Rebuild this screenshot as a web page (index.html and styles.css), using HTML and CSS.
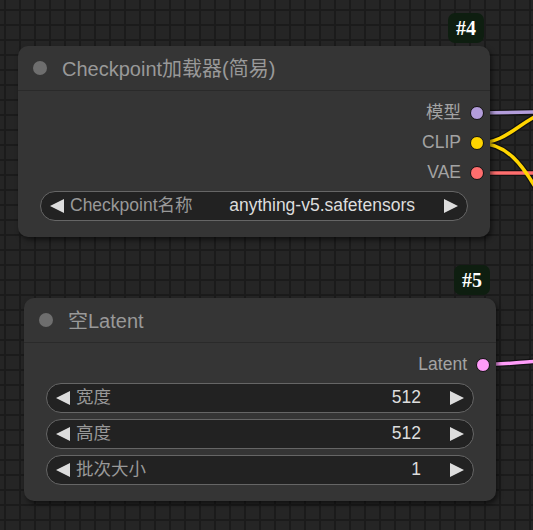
FILE: index.html
```html
<!DOCTYPE html>
<html lang="zh">
<head>
<meta charset="utf-8">
<title>ComfyUI nodes</title>
<link rel="stylesheet" href="styles.css">
</head>
<body>
<div class="canvas">
  <svg class="wires" width="533" height="530" viewBox="0 0 533 530">
    <g class="wire-outline">
      <path d="M477 113 L540 112"/>
      <path d="M477 143 C505 143 515 126 540 114"/>
      <path d="M477 143 C505 143 522 160 545 205"/>
      <path d="M477 173 L540 173"/>
      <path d="M484 364.5 C510 364 520 362 540 361"/>
    </g>
    <path class="wire model" d="M477 113 L540 112"/>
    <path class="wire vae" d="M477 173 L540 173"/>
    <path class="wire clip" d="M477 143 C505 143 515 126 540 114"/>
    <path class="wire clip" d="M477 143 C505 143 522 160 545 205"/>
    <path class="wire latent" d="M484 364.5 C510 364 520 362 540 361"/>
  </svg>

  <div class="badge badge-4">#4</div>
  <div class="node node-ckpt">
    <div class="node-title"><span class="title-dot"></span><span class="title-text">Checkpoint加载器(简易)</span></div>
    <div class="node-body">
      <div class="outputs">
        <div class="slot"><span class="slot-label">模型</span><span class="slot-dot dot-model"></span></div>
        <div class="slot"><span class="slot-label">CLIP</span><span class="slot-dot dot-clip"></span></div>
        <div class="slot"><span class="slot-label">VAE</span><span class="slot-dot dot-vae"></span></div>
      </div>
      <div class="widgets">
        <div class="widget"><span class="arrow arrow-left"></span><span class="w-label">Checkpoint名称</span><span class="w-value">anything-v5.safetensors</span><span class="arrow arrow-right"></span></div>
      </div>
    </div>
  </div>

  <div class="badge badge-5">#5</div>
  <div class="node node-latent">
    <div class="node-title"><span class="title-dot"></span><span class="title-text">空Latent</span></div>
    <div class="node-body">
      <div class="outputs">
        <div class="slot"><span class="slot-label">Latent</span><span class="slot-dot dot-latent"></span></div>
      </div>
      <div class="widgets">
        <div class="widget"><span class="arrow arrow-left"></span><span class="w-label">宽度</span><span class="w-value">512</span><span class="arrow arrow-right"></span></div>
        <div class="widget"><span class="arrow arrow-left"></span><span class="w-label">高度</span><span class="w-value">512</span><span class="arrow arrow-right"></span></div>
        <div class="widget"><span class="arrow arrow-left"></span><span class="w-label">批次大小</span><span class="w-value">1</span><span class="arrow arrow-right"></span></div>
      </div>
    </div>
  </div>
</div>
</body>
</html>
```

FILE: styles.css
```css
html, body {
  margin: 0;
  padding: 0;
  width: 533px;
  height: 530px;
  overflow: hidden;
  background: #222222;
}

.canvas {
  position: relative;
  width: 533px;
  height: 530px;
  background-color: #252525;
  background-image:
    linear-gradient(to right, #1b1b1b 2px, transparent 2px),
    linear-gradient(to bottom, #1b1b1b 2px, transparent 2px);
  background-size: 15px 15px;
  background-position: 4px 9px;
  font-family: "Liberation Sans", Arial, "Noto Sans CJK SC", sans-serif;
}

.wires {
  position: absolute;
  left: 0;
  top: 0;
}

.wire-outline path {
  fill: none;
  stroke: #111;
  stroke-width: 6;
}

.wire {
  fill: none;
  stroke-width: 3.5;
}
.wire.model { stroke: #b39ddb; }
.wire.clip { stroke: #ffd500; }
.wire.vae { stroke: #ff6e6e; }
.wire.latent { stroke: #ff9cf9; }

.badge {
  position: absolute;
  height: 30px;
  padding: 0 8px;
  border-radius: 7px;
  background: #0e1e10;
  color: #ffffff;
  font-family: "Liberation Serif", "Times New Roman", serif;
  font-weight: bold;
  font-size: 20px;
  line-height: 30px;
}
.badge-4 { left: 448px; top: 13px; }
.badge-5 { left: 454px; top: 265px; }

.node {
  position: absolute;
  width: 472px;
  background: #353535;
  border-radius: 10px;
  box-shadow: 2px 3px 5px rgba(0, 0, 0, 0.55);
  display: flex;
  flex-direction: column;
}
.node-ckpt { left: 18px; top: 46px; }
.node-latent { left: 24px; top: 298px; }

.node-title {
  height: 45px;
  display: flex;
  align-items: center;
  padding-left: 15px;
  gap: 15px;
  border-bottom: 1px solid #2a2a2a;
  box-sizing: border-box;
}

.title-dot {
  width: 14px;
  height: 14px;
  border-radius: 50%;
  background: #6e6e6e;
  flex: none;
}

.title-text {
  color: #999999;
  font-size: 20px;
  line-height: 1;
  padding-top: 1px;
}

.node-body {
  display: flex;
  flex-direction: column;
  padding-top: 7px;
  padding-bottom: 16px;
}

.outputs {
  display: flex;
  flex-direction: column;
}

.slot {
  height: 30px;
  display: flex;
  align-items: center;
  justify-content: flex-end;
  padding-right: 6px;
  gap: 9px;
}

.slot-label {
  color: #a3a3a3;
  font-size: 17.5px;
  line-height: 1;
}

.slot-dot {
  width: 12px;
  height: 12px;
  border-radius: 50%;
  border: 1px solid #111;
  flex: none;
}
.dot-model { background: #b39ddb; }
.dot-clip { background: #ffd500; }
.dot-vae { background: #ff6e6e; }
.dot-latent { background: #ff9cf9; }

.widgets {
  display: flex;
  flex-direction: column;
  gap: 6px;
  margin: 3px 22px 0;
}

.widget {
  height: 30px;
  box-sizing: border-box;
  border: 1px solid #666666;
  border-radius: 15px;
  background: #222222;
  display: flex;
  align-items: center;
  padding: 0 9px 0 9px;
  font-size: 17.5px;
}

.arrow {
  width: 0;
  height: 0;
  border-top: 7.5px solid transparent;
  border-bottom: 7.5px solid transparent;
  flex: none;
}
.arrow-left { border-right: 14px solid #dddddd; }
.arrow-right { border-left: 14px solid #dddddd; }

.w-label {
  color: #999999;
  margin-left: 6px;
  flex: 1;
  line-height: 1;
}

.w-value {
  color: #dddddd;
  margin-right: 29px;
  line-height: 1;
}
```
